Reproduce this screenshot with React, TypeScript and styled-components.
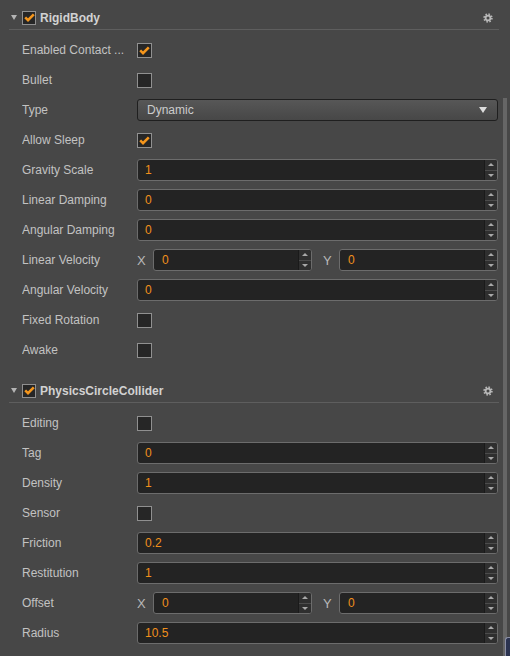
import styled, { createGlobalStyle } from "styled-components";

const GlobalStyle = createGlobalStyle`
  html, body {
    margin: 0;
    padding: 0;
    background: #474747;
    overflow: hidden;
  }
  body {
    font-family: "Liberation Sans", Arial, sans-serif;
    font-size: 12px;
    color: #bdbdbd;
  }
`;

const Page = styled.div`
  display: flex;
  width: 510px;
  height: 656px;
  background: #474747;
  overflow: hidden;
`;

const Inspector = styled.div`
  display: flex;
  flex-direction: column;
  width: 503px;
  flex-shrink: 0;
`;

const ScrollTrack = styled.div`
  position: relative;
  flex: 1;
  display: flex;
  flex-direction: column;
`;

const ScrollThumb = styled.div`
  width: 4px;
  margin-top: 98px;
  flex: 1;
  background: #666666;
`;

const CornerNub = styled.div`
  position: absolute;
  right: 0;
  bottom: 0;
  width: 4px;
  height: 18px;
  background: #2b3350;
  border: 1px solid #8c90a6;
  border-right: none;
  border-bottom: none;
  border-radius: 3px 0 0 0;
`;

const Section = styled.section<{ $top: number }>`
  display: flex;
  flex-direction: column;
  padding-top: ${(p) => p.$top}px;
`;

const Header = styled.div`
  display: flex;
  align-items: center;
  height: 24px;
  margin-left: 9px;
  width: 490px;
  padding: 0 6px 0 2px;
  box-sizing: border-box;
  border-bottom: 1px solid #5e5e5e;
`;

const Fold = styled.span`
  width: 0;
  height: 0;
  border-left: 3px solid transparent;
  border-right: 3px solid transparent;
  border-top: 5px solid #b4b4b4;
  margin-right: 5px;
`;

const Title = styled.span`
  flex: 1;
  margin-left: 4px;
  font-weight: 700;
  font-size: 12px;
  color: #d2d2d2;
`;

const Rows = styled.div`
  display: flex;
  flex-direction: column;
  padding-top: 5px;
`;

const Row = styled.div`
  display: flex;
  align-items: center;
  height: 30px;
  padding: 0 5px 0 22px;
`;

const Label = styled.span`
  width: 115px;
  flex-shrink: 0;
  color: #c2c2c2;
  white-space: nowrap;
  overflow: hidden;
`;

const Control = styled.div`
  flex: 1;
  display: flex;
  align-items: center;
  min-width: 0;
`;

const Box = styled.span<{ $size: number }>`
  display: inline-flex;
  align-items: center;
  justify-content: center;
  width: ${(p) => p.$size}px;
  height: ${(p) => p.$size}px;
  box-sizing: border-box;
  border: 1px solid #909090;
  background: #262626;
`;

const Field = styled.div`
  flex: 1;
  display: flex;
  height: 22px;
  box-sizing: border-box;
  border: 1px solid #6c6c6c;
  border-radius: 3px;
  background: #232323;
  overflow: hidden;
`;

const Value = styled.span<{ $pad: number }>`
  flex: 1;
  display: flex;
  align-items: center;
  padding-left: ${(p) => p.$pad}px;
  color: #f0901c;
  font-size: 12px;
`;

const Spinner = styled.div`
  width: 12px;
  display: flex;
  flex-direction: column;
  border-left: 1px solid #1a1a1a;
  background: #2f2f2f;
`;

const SpinHalf = styled.div<{ $up?: boolean }>`
  flex: 1;
  display: flex;
  align-items: center;
  justify-content: center;
  border-bottom: ${(p) => (p.$up ? "1px solid #4c4c4c" : "none")};
`;

const Arrow = styled.span<{ $up?: boolean }>`
  width: 0;
  height: 0;
  border-left: 3px solid transparent;
  border-right: 3px solid transparent;
  ${(p) =>
    p.$up ? "border-bottom: 3px solid #a8a8a8;" : "border-top: 3px solid #a8a8a8;"}
`;

const Axis = styled.span<{ $gap: number }>`
  width: 16px;
  margin-left: ${(p) => p.$gap}px;
  flex-shrink: 0;
  color: #b8b8b8;
  font-size: 13px;
`;

const Select = styled.div`
  flex: 1;
  display: flex;
  align-items: center;
  justify-content: space-between;
  height: 22px;
  box-sizing: border-box;
  padding: 0 10px 0 9px;
  border: 1px solid #1f1f1f;
  border-radius: 3px;
  background: linear-gradient(#575757, #474747);
  color: #cccccc;
`;

const DropArrow = styled.span`
  width: 0;
  height: 0;
  border-left: 4px solid transparent;
  border-right: 4px solid transparent;
  border-top: 6px solid #dddddd;
`;

const Tick = () => (
  <svg width="11" height="9" viewBox="0 0 11 9">
    <path
      d="M1.2 4.4 L4 7.1 L9.8 1.3"
      fill="none"
      stroke="#f5961c"
      strokeWidth="2.6"
      strokeLinejoin="miter"
    />
  </svg>
);

const Gear = () => (
  <svg width="10" height="10" viewBox="0 0 10 10">
    <circle cx="5" cy="5" r="3.9" fill="none" stroke="#b9b9b9" strokeWidth="1.6" strokeDasharray="1.55 1.51" />
    <circle cx="5" cy="5" r="2.4" fill="none" stroke="#b9b9b9" strokeWidth="1.8" />
  </svg>
);

const Check = ({ on, size = 15 }: { on?: boolean; size?: number }) => (
  <Box $size={size}>{on && <Tick />}</Box>
);

const NumberField = ({ value, pad = 7 }: { value: string; pad?: number }) => (
  <Field>
    <Value $pad={pad}>{value}</Value>
    <Spinner>
      <SpinHalf $up>
        <Arrow $up />
      </SpinHalf>
      <SpinHalf>
        <Arrow />
      </SpinHalf>
    </Spinner>
  </Field>
);

type Prop =
  | { label: string; kind: "check"; on?: boolean }
  | { label: string; kind: "number"; value: string }
  | { label: string; kind: "vector"; x: string; y: string }
  | { label: string; kind: "select"; value: string };

const rigidBody: Prop[] = [
  { label: "Enabled Contact ...", kind: "check", on: true },
  { label: "Bullet", kind: "check" },
  { label: "Type", kind: "select", value: "Dynamic" },
  { label: "Allow Sleep", kind: "check", on: true },
  { label: "Gravity Scale", kind: "number", value: "1" },
  { label: "Linear Damping", kind: "number", value: "0" },
  { label: "Angular Damping", kind: "number", value: "0" },
  { label: "Linear Velocity", kind: "vector", x: "0", y: "0" },
  { label: "Angular Velocity", kind: "number", value: "0" },
  { label: "Fixed Rotation", kind: "check" },
  { label: "Awake", kind: "check" },
];

const circleCollider: Prop[] = [
  { label: "Editing", kind: "check" },
  { label: "Tag", kind: "number", value: "0" },
  { label: "Density", kind: "number", value: "1" },
  { label: "Sensor", kind: "check" },
  { label: "Friction", kind: "number", value: "0.2" },
  { label: "Restitution", kind: "number", value: "1" },
  { label: "Offset", kind: "vector", x: "0", y: "0" },
  { label: "Radius", kind: "number", value: "10.5" },
];

const PropControl = ({ prop }: { prop: Prop }) => {
  switch (prop.kind) {
    case "check":
      return <Check on={prop.on} />;
    case "number":
      return <NumberField value={prop.value} />;
    case "select":
      return (
        <Select>
          <span>{prop.value}</span>
          <DropArrow />
        </Select>
      );
    case "vector":
      return (
        <>
          <Axis $gap={0}>X</Axis>
          <NumberField value={prop.x} pad={8} />
          <Axis $gap={11}>Y</Axis>
          <NumberField value={prop.y} pad={8} />
        </>
      );
  }
};

const Component = ({ title, props, top }: { title: string; props: Prop[]; top: number }) => (
  <Section $top={top}>
    <Header>
      <Fold />
      <Check on size={14} />
      <Title>{title}</Title>
      <Gear />
    </Header>
    <Rows>
      {props.map((p) => (
        <Row key={p.label}>
          <Label>{p.label}</Label>
          <Control>
            <PropControl prop={p} />
          </Control>
        </Row>
      ))}
    </Rows>
  </Section>
);

export default function App() {
  return (
    <>
      <GlobalStyle />
      <Page>
        <Inspector>
          <Component title="RigidBody" props={rigidBody} top={6} />
          <Component title="PhysicsCircleCollider" props={circleCollider} top={14} />
        </Inspector>
        <ScrollTrack>
          <ScrollThumb />
          <CornerNub />
        </ScrollTrack>
      </Page>
    </>
  );
}
